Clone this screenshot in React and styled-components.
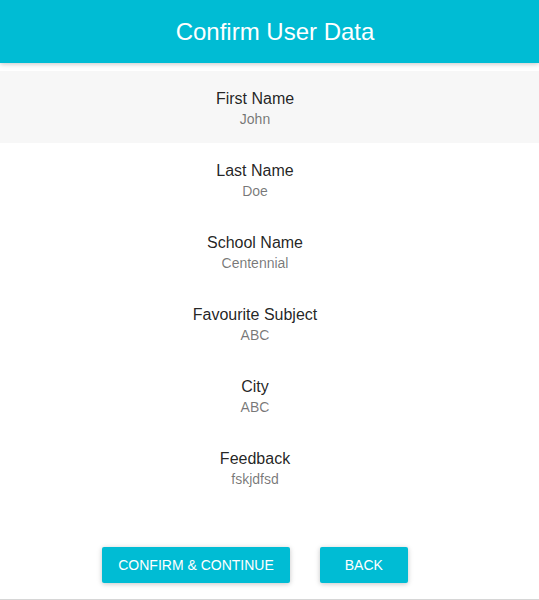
import React from "react";
import styled, { createGlobalStyle } from "styled-components";

const GlobalStyle = createGlobalStyle`
  body {
    margin: 0;
    background: #ffffff;
    font-family: "Liberation Sans", Arial, sans-serif;
  }
`;

const fields = [
  { label: "First Name", value: "John" },
  { label: "Last Name", value: "Doe" },
  { label: "School Name", value: "Centennial" },
  { label: "Favourite Subject", value: "ABC" },
  { label: "City", value: "ABC" },
  { label: "Feedback", value: "fskjdfsd" },
];

const App = () => {
  return (
    <Page>
      <GlobalStyle />
      <AppBar>
        <Title>Confirm User Data</Title>
      </AppBar>
      <Content>
        <List>
          {fields.map((f, i) => (
            <Item key={f.label} $active={i === 0}>
              <Primary>{f.label}</Primary>
              <Secondary>{f.value}</Secondary>
            </Item>
          ))}
        </List>
        <Actions>
          <Button>Confirm &amp; Continue</Button>
          <Button>Back</Button>
        </Actions>
      </Content>
      <BottomLine />
    </Page>
  );
};

export default App;

const Page = styled.div`
  width: 100%;
  min-height: 600px;
  display: flex;
  flex-direction: column;
`;

const AppBar = styled.header`
  height: 63px;
  background-color: #00bcd4;
  display: flex;
  align-items: center;
  justify-content: center;
  padding-left: 11px;
  box-shadow: 0 1px 6px rgba(0, 0, 0, 0.12), 0 1px 4px rgba(0, 0, 0, 0.12);
  position: relative;
  z-index: 1;
`;

const Title = styled.h1`
  margin: 0;
  font-size: 24px;
  font-weight: 400;
  color: #ffffff;
  line-height: 62px;
`;

const Content = styled.main`
  width: 510px;
  display: flex;
  flex-direction: column;
  flex: 1;
`;

const List = styled.ul`
  list-style: none;
  margin: 0;
  padding: 8px 0;
  text-align: center;
`;

const Item = styled.li`
  height: 72px;
  box-sizing: border-box;
  padding-top: 20px;
  margin: 0 -29px 0 0;
  padding-right: 29px;
  background-color: ${(p) => (p.$active ? "#f7f7f7" : "transparent")};
`;

const Primary = styled.div`
  font-size: 16px;
  line-height: 16px;
  color: rgba(0, 0, 0, 0.87);
`;

const Secondary = styled.div`
  margin-top: 4px;
  font-size: 14px;
  line-height: 16px;
  color: rgba(0, 0, 0, 0.54);
`;

const Actions = styled.div`
  display: flex;
  justify-content: center;
  margin-top: 21px;
`;

const Button = styled.button`
  margin: 15px;
  min-width: 88px;
  height: 36px;
  padding: 0 16px;
  border: none;
  border-radius: 2px;
  background-color: #00bcd4;
  color: #ffffff;
  font-family: "Liberation Sans", Arial, sans-serif;
  font-size: 14px;
  text-transform: uppercase;
  cursor: pointer;
  box-shadow: 0 1px 6px rgba(0, 0, 0, 0.12), 0 1px 4px rgba(0, 0, 0, 0.12);
`;

const BottomLine = styled.div`
  height: 1px;
  margin-top: auto;
  background-color: #d6d6d6;
`;
